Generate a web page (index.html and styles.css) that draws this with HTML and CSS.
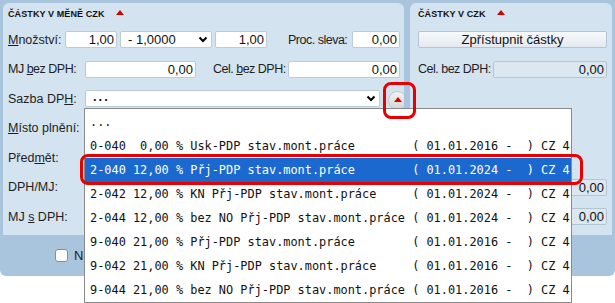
FILE: index.html
```html
<!DOCTYPE html>
<html lang="cs">
<head>
    <meta charset="UTF-8">
    <title>Částky</title>
    <link rel="stylesheet" href="styles.css">
</head>
<body>

<div class="frame">
    <div class="panels">
        <section class="panel panel-main">
            <div class="panel-head"><span class="tab">ČÁSTKY V MĚNĚ CZK</span><span class="tri"></span></div>
            <div class="row">
                <label class="lbl w57"><u>M</u>nožství:</label>
                <input class="w52" type="text" value="1,00">
                <div class="select w92 ml3"><span>- 1,0000</span><svg width="10" height="7" viewBox="0 0 10 7"><polyline points="1.5,1.5 5,5 8.5,1.5" fill="none" stroke="#000" stroke-width="2"/></svg></div>
                <input class="w52 ml3" type="text" value="1,00">
                <label class="lbl tight w64 ml21">Proc. sleva:</label>
                <input class="w48" type="text" value="0,00">
            </div>
            <div class="row">
                <label class="lbl tight w77">MJ <u>b</u>ez DPH:</label>
                <input class="w111" type="text" value="0,00">
                <label class="lbl tight w75 ml17">Cel. <u>b</u>ez DPH:</label>
                <input class="w112" type="text" value="0,00">
            </div>
            <div class="row">
                <label class="lbl w77">Sazba DP<u>H</u>:</label>
                <div class="select w295"><span class="dots">...</span><svg width="10" height="7" viewBox="0 0 10 7"><polyline points="1.5,1.5 5,5 8.5,1.5" fill="none" stroke="#000" stroke-width="2"/></svg></div>
                <button class="round-btn"><span class="tri"></span></button>
            </div>
            <div class="row"><label class="lbl w77"><u>M</u>ísto plnění:</label></div>
            <div class="row"><label class="lbl w77">Před<u>m</u>ět:</label></div>
            <div class="row"><label class="lbl w77">DPH/MJ:</label></div>
            <div class="row"><label class="lbl w77">MJ <u>s</u> DPH:</label></div>
        </section>

        <section class="panel panel-czk">
            <div class="panel-head"><span class="tab">ČÁSTKY V CZK</span><span class="tri"></span></div>
            <div class="row"><button class="wide-btn">Zpřístupnit částky</button></div>
            <div class="row">
                <label class="lbl tight w75">Cel. bez DPH:</label>
                <input class="w114 off" type="text" value="0,00" readonly>
            </div>
            <div class="row"></div>
            <div class="row"></div>
            <div class="row"></div>
            <div class="row">
                <span class="w75"></span>
                <input class="w114 off" type="text" value="0,00" readonly>
            </div>
            <div class="row">
                <span class="w75"></span>
                <input class="w114 off" type="text" value="0,00" readonly>
            </div>
        </section>
    </div>

    <div class="foot">
        <span class="check"></span><span class="check-text">Ne</span>
    </div>

    <!-- rozbalený seznam sazeb DPH -->
    <ul class="vat-list">
        <li>...</li>
        <li>0-040  0,00 % Usk-PDP stav.mont.práce        ( 01.01.2016 -  ) CZ 4</li>
        <li class="active">2-040 12,00 % Přj-PDP stav.mont.práce        ( 01.01.2024 -  ) CZ 4</li>
        <li>2-042 12,00 % KN Přj-PDP stav.mont.práce     ( 01.01.2024 -  ) CZ 4</li>
        <li>2-044 12,00 % bez NO Přj-PDP stav.mont.práce ( 01.01.2024 -  ) CZ 4</li>
        <li>9-040 21,00 % Přj-PDP stav.mont.práce        ( 01.01.2016 -  ) CZ 4</li>
        <li>9-042 21,00 % KN Přj-PDP stav.mont.práce     ( 01.01.2016 -  ) CZ 4</li>
        <li>9-044 21,00 % bez NO Přj-PDP stav.mont.práce ( 01.01.2016 -  ) CZ 4</li>
    </ul>

    <div class="mark mark-row"></div>
    <div class="mark mark-btn"></div>
</div>

</body>
</html>
```

FILE: styles.css
```css
html, body {
    height: 303px;
}
body {
    margin: 0;
    background-color: white;
    font-family: "Liberation Sans", Arial, sans-serif;
    font-size: 13px;
    color: #1e1e1e;
    overflow: hidden;
}
.frame {
    position: relative;
    width: 615px;
    height: 276px;
    box-sizing: border-box;
    padding: 3px 3px 0;
    background-color: #a9c5de;
    border-radius: 0 0 6px 6px;
}
.panels {
    display: flex;
    gap: 6px;
}
.panel {
    height: 232px;
    background-color: #d4e3f0;
    border-radius: 6px 6px 0 0;
    overflow: hidden;
}
.panel-main {
    width: 401px;
    padding-left: 5px;
    box-sizing: border-box;
}
.panel-czk {
    width: 202px;
    padding-left: 8px;
    box-sizing: border-box;
}
.panel-head {
    height: 22px;
    display: flex;
    align-items: center;
}
.tab {
    font-size: 9px;
    font-weight: bold;
    color: #111;
    letter-spacing: 0.1px;
}
.tri {
    display: inline-block;
    width: 0;
    height: 0;
    border-left: 4px solid transparent;
    border-right: 4px solid transparent;
    border-bottom: 5px solid #d40000;
    margin-left: 11px;
    margin-bottom: 3px;
}
.row {
    display: flex;
    align-items: center;
    height: 29.5px;
}
.lbl {
    flex: none;
    white-space: nowrap;
    font-size: 12.5px;
}
.tight {
    letter-spacing: -0.5px;
}

/* widths and gaps of the form fields */
.w48 { width: 48px; }
.w52 { width: 52px; }
.w57 { width: 57px; }
.w64 { width: 64px; }
.w75 { width: 75px; flex: none; }
.w77 { width: 77px; }
.w92 { width: 92px; }
.w111 { width: 111px; }
.w112 { width: 112px; }
.w114 { width: 114px; }
.w295 { width: 295px; }
.ml3 { margin-left: 3px; }
.ml17 { margin-left: 17px; }
.ml21 { margin-left: 21px; }

input {
    flex: none;
    height: 17px;
    box-sizing: border-box;
    border: 1px solid #bccbd8;
    border-radius: 2px;
    padding: 0 2px;
    margin: 0;
    background-color: white;
    font-family: "Liberation Sans", Arial, sans-serif;
    font-size: 13px;
    color: #111;
    text-align: right;
}
input.off {
    background-color: #dce7f0;
    border-color: #b3c4d3;
}
.select {
    flex: none;
    display: flex;
    align-items: center;
    justify-content: space-between;
    height: 17px;
    box-sizing: border-box;
    border: 1px solid #bccbd8;
    border-radius: 2px;
    padding: 0 3px 0 7px;
    background-color: white;
    color: #111;
}
.dots {
    letter-spacing: 2px;
    font-weight: bold;
    margin-top: -4px;
}
.round-btn {
    flex: none;
    width: 19px;
    height: 19px;
    margin: 4px 0 0 8px;
    padding: 0;
    border: 1px solid #c6c6c6;
    border-radius: 50%;
    background: linear-gradient(#f3f3f3, #d5d5d5);
    display: flex;
    align-items: center;
    justify-content: center;
}
.round-btn .tri {
    margin: 0 0 2px 0;
}
.wide-btn {
    width: 189px;
    height: 17px;
    padding: 0;
    border: 1px solid #b5c4d2;
    border-radius: 2px;
    background: linear-gradient(#f7f9fb, #e3e9ef);
    font-family: "Liberation Sans", Arial, sans-serif;
    font-size: 13px;
    color: #111;
}
.foot {
    height: 41px;
    display: flex;
    align-items: center;
    padding-left: 52px;
}
.check {
    width: 11px;
    height: 11px;
    border: 1px solid #8c8c8c;
    border-radius: 3px;
    background-color: white;
}
.check-text {
    margin-left: 6px;
}
.vat-list {
    position: absolute;
    left: 84px;
    top: 108px;
    width: 488px;
    height: 195px;
    box-sizing: border-box;
    margin: 0;
    padding: 1px 0 0;
    list-style: none;
    background-color: white;
    border: 1px solid #8a8a8a;
    overflow: hidden;
    font-family: "DejaVu Sans Mono", "Liberation Mono", monospace;
    font-size: 11.9px;
    color: #111;
}
.vat-list li {
    height: 24px;
    line-height: 24px;
    padding-left: 5px;
    white-space: pre;
}
.vat-list li.active {
    background-color: #1b68cf;
    color: white;
}
.mark {
    position: absolute;
    border: 3px solid #e60000;
    border-radius: 8px;
    box-sizing: border-box;
}
.mark-row {
    left: 80px;
    top: 154px;
    width: 503px;
    height: 31px;
}
.mark-btn {
    left: 383px;
    top: 82px;
    width: 33px;
    height: 37px;
}
```
